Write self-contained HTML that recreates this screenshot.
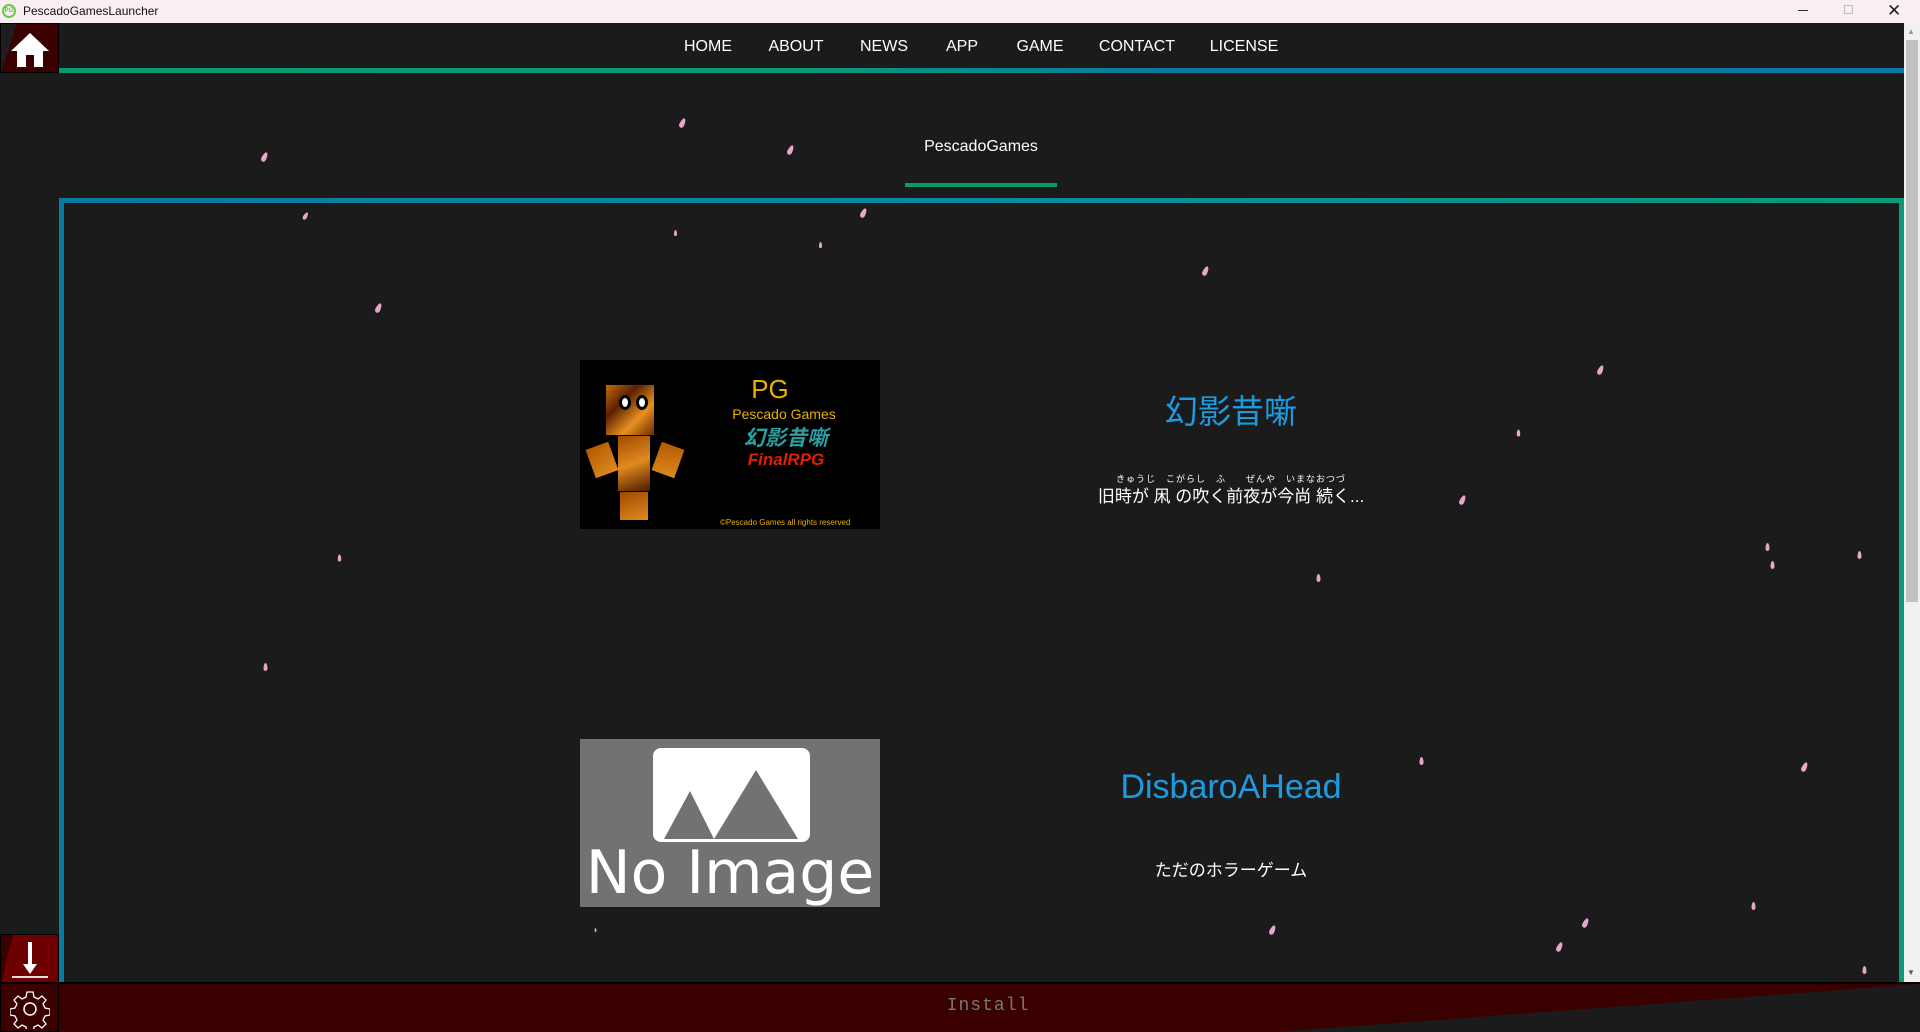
<!DOCTYPE html>
<html><head><meta charset="utf-8"><style>
*{margin:0;padding:0;box-sizing:border-box}
body{width:1920px;height:1032px;background:#1b1b1b;position:relative;overflow:hidden;font-family:"Liberation Sans","Noto Sans CJK JP",sans-serif}
.abs{position:absolute}
.title{left:0;top:0;width:1920px;height:23px;background:#f8eef3;font-size:12px;color:#111}
.nav a{position:absolute;top:38px;color:#fff;font-size:16px;transform:translateX(-50%);text-decoration:none}
.petal{position:absolute;width:5px;height:10px;background:#e8a6cf;border-radius:50% 50% 50% 50%/70% 70% 30% 30%;transform:rotate(25deg)}
.desc{color:#fff;font-size:17px;text-align:center;transform:translateX(-50%)}
</style></head><body>
<div class="abs title">
 <div class="abs" style="left:2px;top:4px;width:14px;height:14px;border-radius:50%;border:2px solid #6c4;font-size:6px;line-height:10px;text-align:center;color:#2a2">PG</div>
 <div class="abs" style="left:23px;top:4px">PescadoGamesLauncher</div>
 <div class="abs" style="left:1798px;top:10px;width:10px;height:1px;background:#333"></div>
 <div class="abs" style="left:1844px;top:5px;width:9px;height:9px;border:1px solid #bbb"></div>
 <div class="abs" style="left:1887px;top:1px;font-size:17px;color:#222">✕</div>
</div>
<!-- left sidebar -->
<div class="abs" style="left:0;top:23px;width:59px;height:1009px;background:#1b1b1b"></div>
<div class="abs" style="left:0;top:23px;width:59px;height:50px;background:#3a0000;border:1px solid #000;overflow:hidden">
 <div class="abs" style="left:0;top:0;width:0;height:0;border-top:48px solid #1e1e1e;border-right:16px solid transparent"></div>
 <svg class="abs" style="left:8px;top:7px" width="42" height="38" viewBox="0 0 42 38"><path d="M21 2 L40 20 L34 20 L34 36 L25 36 L25 24 L17 24 L17 36 L8 36 L8 20 L2 20 Z" fill="#fff"/></svg>
</div>
<div class="abs" style="left:0;top:934px;width:59px;height:49px;background:#6e0000;border:1px solid #000;overflow:hidden">
 <div class="abs" style="left:0;top:0;border-top:48px solid #3a0000;border-right:12px solid transparent"></div>
 <svg class="abs" style="left:8px;top:5px" width="42" height="40" viewBox="0 0 42 40"><rect x="19" y="2" width="4" height="24" fill="#fff"/><path d="M14 24 L28 24 L21 34 Z" fill="#fff"/><rect x="3" y="36" width="36" height="2" fill="#ddd"/></svg>
</div>
<div class="abs" style="left:0;top:983px;width:59px;height:49px;background:#3a0000;border:1px solid #000">
 <svg class="abs" style="left:9px;top:5px" width="40" height="40" viewBox="0 0 40 40"><circle cx="20" cy="20" r="6" fill="none" stroke="#fff" stroke-width="1.5"/><path d="M17 3h6l1 5 4 2 4-3 4 4-3 4 2 4 5 1v6l-5 1-2 4 3 4-4 4-4-3-4 2-1 5h-6l-1-5-4-2-4 3-4-4 3-4-2-4-5-1v-6l5-1 2-4-3-4 4-4 4 3 4-2z" fill="none" stroke="#fff" stroke-width="1.3"/></svg>
</div>
<!-- nav -->
<div class="abs" style="left:59px;top:68px;width:1846px;height:5px;background:linear-gradient(90deg,#0a9a70,#0a9a78 40%,#0a7aa0 60%,#0a78a0)"></div>
<div class="nav">
 <a style="left:708px">HOME</a><a style="left:796px">ABOUT</a><a style="left:884px">NEWS</a><a style="left:962px">APP</a><a style="left:1040px">GAME</a><a style="left:1137px">CONTACT</a><a style="left:1244px">LICENSE</a>
</div>
<div class="abs" style="left:981px;top:138px;transform:translateX(-50%);color:#fff;font-size:16px">PescadoGames</div>
<div class="abs" style="left:905px;top:183px;width:152px;height:4px;background:#0a9a70"></div>
<!-- content box -->
<div class="abs" style="left:59px;top:198px;width:1845px;height:790px;border:5px solid;border-image:linear-gradient(90deg,#0a7aa0,#0a8aa0 50%,#0a9a78) 1;border-bottom:none"></div>
<!-- scrollbar -->
<div class="abs" style="left:1904px;top:23px;width:16px;height:959px;background:#f0f0f0"></div>
<div class="abs" style="left:1906px;top:40px;width:12px;height:562px;background:#c1c1c1"></div>
<div class="abs" style="left:1907px;top:27px;font-size:8px;color:#999">▲</div>
<div class="abs" style="left:1907px;top:968px;font-size:8px;color:#555">▼</div>
<!-- card 1 -->
<div class="abs" style="left:580px;top:360px;width:300px;height:169px;background:#000;overflow:hidden">
 <div class="abs" style="left:26px;top:25px;width:48px;height:50px;background:linear-gradient(135deg,#c96a08,#5a2000,#e89020,#6a2a00)"></div>
 <div class="abs" style="left:39px;top:35px;width:12px;height:15px;border-radius:50%;background:#fff;border:3px solid #000"></div>
 <div class="abs" style="left:56px;top:35px;width:12px;height:15px;border-radius:50%;background:#fff;border:3px solid #000"></div>
 <div class="abs" style="left:38px;top:76px;width:32px;height:55px;background:linear-gradient(160deg,#a04a00,#e08a20,#4a1a00)"></div>
 <div class="abs" style="left:10px;top:85px;width:24px;height:30px;background:linear-gradient(160deg,#b05a00,#e08a20);transform:rotate(-20deg)"></div>
 <div class="abs" style="left:76px;top:85px;width:24px;height:30px;background:linear-gradient(160deg,#b05a00,#e08a20);transform:rotate(20deg)"></div>
 <div class="abs" style="left:40px;top:132px;width:28px;height:28px;background:linear-gradient(160deg,#a04a00,#e08a20)"></div>
 <div class="abs" style="left:190px;top:14px;color:#e8b000;font-size:26px;transform:translateX(-50%)">PG</div>
 <div class="abs" style="left:204px;top:46px;color:#e8b000;font-size:14px;transform:translateX(-50%);white-space:nowrap">Pescado Games</div>
 <div class="abs" style="left:206px;top:62px;color:#2aa0a0;font-size:21px;font-style:italic;font-weight:bold;transform:translateX(-50%);white-space:nowrap">幻影昔噺</div>
 <div class="abs" style="left:206px;top:90px;color:#e02000;font-size:17px;font-style:italic;font-weight:bold;transform:translateX(-50%)">FinalRPG</div>
 <div class="abs" style="left:140px;top:158px;color:#e8b000;font-size:8px;white-space:nowrap">©Pescado Games all rights reserved</div>
</div>
<div class="abs" style="left:1231px;top:385px;transform:translateX(-50%);color:#1e9be0;font-size:33px;white-space:nowrap">幻影昔噺</div>
<div class="abs desc" style="left:1231px;top:472px;font-size:9px;white-space:nowrap;letter-spacing:1px">きゅうじ　こがらし　ふ　　ぜんや　いまなおつづ</div>
<div class="abs desc" style="left:1231px;top:482px;white-space:nowrap">旧時が 凩 の吹く前夜が今尚 続く...</div>
<!-- card 2 -->
<div class="abs" style="left:580px;top:739px;width:300px;height:168px;background:#727272;overflow:hidden">
 <div class="abs" style="left:73px;top:9px;width:157px;height:94px;background:#fff;border-radius:8px"></div>
 <svg class="abs" style="left:82px;top:24px" width="140" height="80" viewBox="0 0 140 80"><path d="M2 76 L28 28 L52 76 Z M52 76 L94 7 L136 76 Z" fill="#727272"/></svg>
 <div class="abs" style="left:150px;top:100px;transform:translateX(-50%);color:#fff;font-size:60px;white-space:nowrap;font-family:'DejaVu Sans',sans-serif;line-height:68px">No Image</div>
</div>
<div class="abs" style="left:1231px;top:768px;transform:translateX(-50%);color:#1e9be0;font-size:34px;white-space:nowrap">DisbaroAHead</div>
<div class="abs desc" style="left:1231px;top:856px;white-space:nowrap">ただのホラーゲーム</div>
<!-- bottom bar -->
<div class="abs" style="left:59px;top:982px;width:1861px;height:50px;background:#3a0000;border-top:2px solid #000;overflow:hidden">
 <svg class="abs" style="left:0;top:0" width="1861" height="50"><path d="M1190 50 L1861 0 L1861 50 Z" fill="#1b1b1b"/></svg>
 <div class="abs" style="left:929px;top:12px;transform:translateX(-50%);color:#777;font-size:18px;font-family:'Liberation Mono',monospace;letter-spacing:1px">Install</div>
</div>
<!-- petals -->
<div class="petal" style="left:680px;top:118px"></div>
<div class="petal" style="left:262px;top:152px"></div>
<div class="petal" style="left:788px;top:145px"></div>
<div class="petal" style="left:303px;top:211px;transform:rotate(30deg) scale(.8)"></div>
<div class="petal" style="left:861px;top:208px"></div>
<div class="petal" style="left:673px;top:228px;transform:scale(.6)"></div>
<div class="petal" style="left:818px;top:240px;transform:scale(.6)"></div>
<div class="petal" style="left:376px;top:303px"></div>
<div class="petal" style="left:1203px;top:266px"></div>
<div class="petal" style="left:1598px;top:365px"></div>
<div class="petal" style="left:1516px;top:428px;transform:scale(.7)"></div>
<div class="petal" style="left:1460px;top:495px"></div>
<div class="petal" style="left:1765px;top:542px;transform:scale(.8)"></div>
<div class="petal" style="left:1770px;top:560px;transform:scale(.8)"></div>
<div class="petal" style="left:1857px;top:550px;transform:scale(.8)"></div>
<div class="petal" style="left:1316px;top:573px;transform:scale(.8)"></div>
<div class="petal" style="left:337px;top:553px;transform:scale(.7)"></div>
<div class="petal" style="left:263px;top:662px;transform:scale(.8)"></div>
<div class="petal" style="left:1419px;top:756px;transform:scale(.8)"></div>
<div class="petal" style="left:1802px;top:762px"></div>
<div class="petal" style="left:1751px;top:901px;transform:scale(.8)"></div>
<div class="petal" style="left:1583px;top:918px"></div>
<div class="petal" style="left:1270px;top:925px"></div>
<div class="petal" style="left:1557px;top:942px"></div>
<div class="petal" style="left:1862px;top:965px;transform:scale(.8)"></div>
<div class="petal" style="left:593px;top:925px;transform:scale(.4)"></div>
</body></html>
